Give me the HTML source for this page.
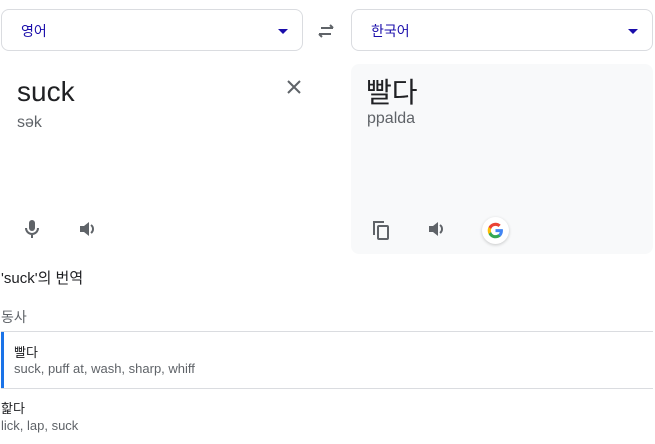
<!DOCTYPE html>
<html><head><meta charset="utf-8"><style>
*{margin:0;padding:0;box-sizing:border-box}
body{width:655px;height:444px;background:#fff;font-family:"Liberation Sans","Noto Sans CJK KR",sans-serif;position:relative;overflow:hidden;color:#202124}
.a{position:absolute}
.sel{position:absolute;top:9px;height:42px;border:1px solid #dadce0;border-radius:8px;width:302px}
.sel span{position:absolute;left:19px;top:11px;font-size:14px;color:#1a0dab}
.sel i{position:absolute;right:14px;top:19px;width:0;height:0;border-left:5px solid transparent;border-right:5px solid transparent;border-top:5px solid #1a0dab}
</style></head><body>
<div class="sel" style="left:1px"><span>영어</span><i></i></div>
<div class="sel" style="left:351px"><span>한국어</span><i></i></div>
<svg class="a" style="left:316px;top:22px" width="20" height="18" viewBox="0 0 20 18"><path d="M5 6h12M14 3l3 3M15 12H3M6 15l-3-3" stroke="#5f6368" stroke-width="2" fill="none"/></svg>
<div class="a" style="left:17px;top:76px;font-size:28px">suck</div>
<div class="a" style="left:17px;top:114px;font-size:16px;color:#5f6368">sək</div>
<svg class="a" style="left:286px;top:79px" width="16" height="16"><path d="M2 2l12 12M14 2L2 14" stroke="#5f6368" stroke-width="2"/></svg>
<div class="a" style="left:351px;top:64px;width:302px;height:190px;background:#f8f9fa;border-radius:8px"></div>
<div class="a" style="left:366px;top:71px;font-size:28px">빨다</div>
<div class="a" style="left:367px;top:110px;font-size:16px;color:#5f6368">ppalda</div>
<svg class="a" style="left:24px;top:219px" width="16" height="20" viewBox="0 0 16 20"><rect x="5" y="1" width="6" height="11" rx="3" fill="#5f6368"/><path d="M2 9a6 6 0 0 0 12 0M8 15v4" stroke="#5f6368" stroke-width="2" fill="none"/></svg>
<svg class="a" style="left:78px;top:219px" width="20" height="20" viewBox="0 0 20 20"><path d="M2 7h4l5-4v14l-5-4H2z" fill="#5f6368"/><path d="M13 6a5 5 0 0 1 0 8" stroke="#5f6368" stroke-width="2" fill="none"/></svg>
<svg class="a" style="left:371px;top:219px" width="20" height="22" viewBox="0 0 20 22"><path d="M3 16V3h10" stroke="#5f6368" stroke-width="2" fill="none"/><rect x="7" y="7" width="10" height="13" rx="1" stroke="#5f6368" stroke-width="2" fill="none"/></svg>
<svg class="a" style="left:427px;top:219px" width="20" height="20" viewBox="0 0 20 20"><path d="M2 7h4l5-4v14l-5-4H2z" fill="#5f6368"/><path d="M13 6a5 5 0 0 1 0 8" stroke="#5f6368" stroke-width="2" fill="none"/></svg>
<div class="a" style="left:482px;top:217px;width:27px;height:27px;border-radius:50%;background:#fff;box-shadow:0 1px 3px rgba(0,0,0,.2)"></div>
<svg class="a" style="left:487px;top:222px" width="17" height="17" viewBox="0 0 48 48"><path fill="#4285F4" d="M45 24.5c0-1.6-.1-3.1-.4-4.5H24v8.5h11.8c-.5 2.8-2 5.1-4.4 6.7v5.6h7.1C42.7 36.9 45 31.2 45 24.5z"/><path fill="#34A853" d="M24 46c5.9 0 10.9-2 14.5-5.3l-7.1-5.6c-2 1.3-4.5 2.1-7.4 2.1-5.7 0-10.6-3.9-12.3-9.1H4.4v5.7C8 40.9 15.4 46 24 46z"/><path fill="#FBBC05" d="M11.7 28.1c-.4-1.3-.7-2.7-.7-4.1s.3-2.8.7-4.1v-5.7H4.4C2.9 17.1 2 20.4 2 24s.9 6.9 2.4 9.8l7.3-5.7z"/><path fill="#EA4335" d="M24 10.8c3.2 0 6.1 1.1 8.4 3.3l6.3-6.3C34.9 4.2 29.9 2 24 2 15.4 2 8 7.1 4.4 14.2l7.3 5.7c1.7-5.2 6.6-9.1 12.3-9.1z"/></svg>
<div class="a" style="left:1px;top:267px;font-size:15px">'suck'의 번역</div>
<div class="a" style="left:1px;top:307px;font-size:14px;color:#5f6368">동사</div>
<div class="a" style="left:1px;top:331px;width:652px;height:1px;background:#dadce0"></div>
<div class="a" style="left:1px;top:332px;width:3px;height:56px;background:#1a73e8"></div>
<div class="a" style="left:14px;top:342px;font-size:13px">빨다</div>
<div class="a" style="left:14px;top:361px;font-size:13px;color:#5f6368">suck, puff at, wash, sharp, whiff</div>
<div class="a" style="left:1px;top:388px;width:652px;height:1px;background:#dadce0"></div>
<div class="a" style="left:1px;top:398px;font-size:13px">핥다</div>
<div class="a" style="left:1px;top:418px;font-size:13px;color:#5f6368">lick, lap, suck</div>
</body></html>
